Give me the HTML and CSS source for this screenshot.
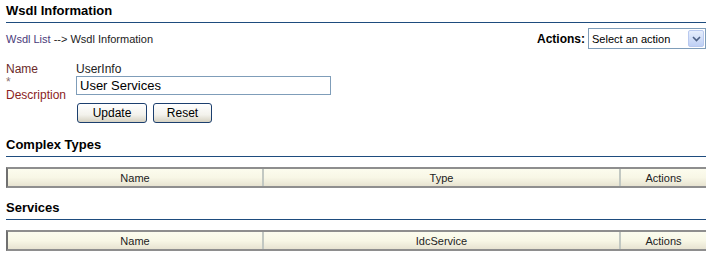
FILE: index.html
```html
<!DOCTYPE html>
<html>
<head>
<meta charset="utf-8">
<link rel="stylesheet" href="styles.css">
</head>
<body>
<div class="page">
  <h2 class="section first">Wsdl Information</h2>
  <div class="toolbar">
    <div class="crumbs"><a class="crumb-link" href="#">Wsdl List</a> --&gt; Wsdl Information</div>
    <div class="actions">
      <span class="actions-label">Actions:</span>
      <div class="select">
        <span class="select-text">Select an action</span>
        <span class="select-btn">
          <svg width="9" height="6" viewBox="0 0 9 6"><path d="M1 1 L4.5 4.5 L8 1" fill="none" stroke="#4d6185" stroke-width="1.6"/></svg>
        </span>
      </div>
    </div>
  </div>
  <div class="form">
    <div class="label">Name</div>
    <div class="value">UserInfo</div>
    <div class="label req"><span class="star">*</span><br>Description</div>
    <div class="field">
      <div class="input">User Services</div>
      <div class="buttons">
        <button class="btn btn-update">Update</button>
        <button class="btn btn-reset">Reset</button>
      </div>
    </div>
  </div>
  <h2 class="section">Complex Types</h2>
  <div class="thead">
    <div class="th col-name">Name</div>
    <div class="th col-mid">Type</div>
    <div class="th col-act">Actions</div>
  </div>
  <h2 class="section">Services</h2>
  <div class="thead">
    <div class="th col-name">Name</div>
    <div class="th col-mid">IdcService</div>
    <div class="th col-act">Actions</div>
  </div>
</div>
</body>
</html>
```
FILE: styles.css
```css
html, body {
  margin: 0;
  padding: 0;
  background: #ffffff;
}
body {
  font-family: "Liberation Sans", Arial, sans-serif;
  font-size: 11px;
  color: #222222;
}
.page {
  padding: 0 6px;
}
.section {
  margin: 0;
  font-size: 13px;
  font-weight: bold;
  color: #000000;
  line-height: 16px;
  padding-bottom: 3px;
  border-bottom: 1px solid #1e4c7e;
}
.section.first {
  padding-top: 3px;
}
.toolbar {
  display: flex;
  justify-content: space-between;
  align-items: center;
  margin-top: 5px;
  height: 21px;
}
.crumbs {
  font-size: 11px;
  color: #222222;
}
.crumb-link {
  color: #4a3a7a;
  text-decoration: none;
}
.actions {
  display: flex;
  align-items: center;
  gap: 3px;
}
.actions-label {
  font-weight: bold;
  font-size: 12px;
  color: #000000;
}
.select {
  border: 1px solid #7f9db9;
  display: flex;
  align-items: center;
  justify-content: space-between;
  padding-left: 3px;
  box-sizing: border-box;
  width: 118px;
  height: 21px;
}
.select-text {
  font-size: 11px;
  color: #000;
}
.select-btn {
  width: 16px;
  height: 17px;
  margin-right: 1px;
  box-sizing: border-box;
  border: 1px solid #b9c9ef;
  border-radius: 2px;
  background: linear-gradient(#e6eefc, #bfd0f5);
  display: flex;
  align-items: center;
  justify-content: center;
}
.form {
  display: grid;
  grid-template-columns: 70px auto;
  justify-content: start;
  margin-top: 13px;
  font-size: 12px;
  line-height: 14px;
}
.label {
  color: #6b2a2a;
}
.label.req {
  color: #8b2323;
  line-height: 13px;
  padding-top: 0;
}
.star {
  color: #8a7070;
}
.value {
  color: #222;
}
.field {
  display: flex;
  flex-direction: column;
  align-items: flex-start;
}
.input {
  width: 255px;
  height: 19px;
  box-sizing: border-box;
  border: 1px solid #7f9db9;
  padding: 1px 3px;
  font-size: 13px;
  line-height: 16px;
  color: #000;
}
.buttons {
  display: flex;
  gap: 6px;
  margin-top: 8px;
  margin-left: 1px;
}
.btn {
  font-family: "Liberation Sans", Arial, sans-serif;
  font-size: 12px;
  color: #000;
  height: 20px;
  padding: 0;
  border: 1px solid #1c3f6e;
  border-radius: 3px;
  background: linear-gradient(#ffffff, #f3f2ec 60%, #d6d2c2);
}
.btn-update {
  width: 70px;
}
.btn-reset {
  width: 59px;
}
.form + .section {
  margin-top: 14px;
}
.thead {
  display: flex;
  height: 21px;
  margin-top: 10px;
  border-top: 2px solid #8e8e8e;
  border-bottom: 2px solid #8e8e8e;
  border-left: 2px solid #707070;
  box-sizing: border-box;
  background: linear-gradient(#fcfcee, #f8f7e6 50%, #e7e3d1);
  margin-bottom: 12px;
}
.th {
  display: flex;
  align-items: center;
  justify-content: center;
  font-size: 11px;
  color: #222;
}
.col-name {
  width: 254px;
}
.col-mid {
  flex: 1;
  border-left: 2px solid #c2c8c2;
  border-right: 2px solid #c2c8c2;
}
.col-act {
  width: 85px;
}
```
